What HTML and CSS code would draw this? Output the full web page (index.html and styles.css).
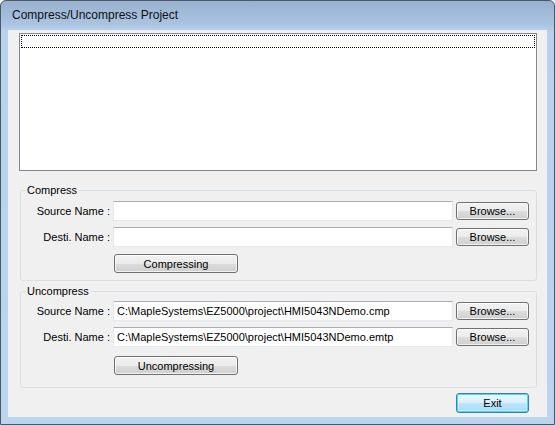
FILE: index.html
```html
<!DOCTYPE html>
<html lang="en">
<head>
  <meta charset="UTF-8" />
  <title>Compress/Uncompress Project</title>
  <link rel="stylesheet" href="styles.css">
</head>
<body>

<div class="window">
  <div class="titlebar">Compress/Uncompress Project</div>

  <div class="client">
    <div class="listbox">
      <div class="focus-row"></div>
    </div>

    <div class="group group-compress">
      <span class="group-title">Compress</span>
      <div class="rows">
        <div class="row">
          <label class="row-label">Source Name :</label>
          <input class="field" type="text" value="" />
          <button class="btn btn-browse">Browse...</button>
        </div>
        <div class="row">
          <label class="row-label">Desti. Name :</label>
          <input class="field" type="text" value="" />
          <button class="btn btn-browse">Browse...</button>
        </div>
        <div class="action">
          <button class="btn btn-wide">Compressing</button>
        </div>
      </div>
    </div>

    <div class="group group-uncompress">
      <span class="group-title">Uncompress</span>
      <div class="rows">
        <div class="row">
          <label class="row-label">Source Name :</label>
          <input class="field" type="text" value="C:\MapleSystems\EZ5000\project\HMI5043NDemo.cmp" />
          <button class="btn btn-browse">Browse...</button>
        </div>
        <div class="row">
          <label class="row-label">Desti. Name :</label>
          <input class="field" type="text" value="C:\MapleSystems\EZ5000\project\HMI5043NDemo.emtp" />
          <button class="btn btn-browse">Browse...</button>
        </div>
        <div class="action">
          <button class="btn btn-wide">Uncompressing</button>
        </div>
      </div>
    </div>

    <div class="footer">
      <button class="btn btn-default">Exit</button>
    </div>
  </div>
</div>

</body>
</html>
```

FILE: styles.css
```css
* {
  box-sizing: border-box;
}

body {
  margin: 0;
  background-color: #f0f0f0;
  font-family: "Liberation Sans", Arial, sans-serif;
  font-size: 11px;
  color: #000;
}

.window {
  width: 555px;
  height: 425px;
  border: 1px solid #4a5868;
  border-radius: 6px 6px 0 0;
  padding: 0 7px 7px 7px;
  background: linear-gradient(to bottom, #97b1cf 0px, #abc4e1 24px, #b9d1ea 30px, #bcd4ee 100%);
  display: flex;
  flex-direction: column;
}

.titlebar {
  height: 29px;
  padding: 7px 0 0 4px;
  font-size: 12px;
  line-height: 15px;
  color: #111;
}

.client {
  flex: 1;
  background-color: #f0f0f0;
  padding-top: 3px;
}

.listbox {
  margin-left: 11px;
  width: 518px;
  height: 138px;
  background-color: #fff;
  border: 1px solid #828790;
  padding: 1px;
}

.focus-row {
  height: 13px;
  border: 1px dotted #000;
}

.group {
  margin-left: 12px;
  width: 517px;
  border: 1px solid #d5dfe5;
  border-radius: 3px;
  padding: 0 0 7px 0;
}

.group-compress {
  margin-top: 19px;
}

.group-uncompress {
  margin-top: 10px;
  padding-bottom: 12px;
}

.group-title {
  display: block;
  width: fit-content;
  height: 13px;
  line-height: 13px;
  margin: -7px 0 0 5px;
  padding: 0 2px 0 1px;
  background-color: #f0f0f0;
}

.rows {
  margin-top: 4px;
  display: flex;
  flex-direction: column;
  gap: 6px;
}

.group-uncompress .rows {
  margin-top: 3px;
}

.row {
  display: flex;
  align-items: center;
  height: 20px;
}

.row-label {
  width: 89px;
  text-align: right;
  margin-right: 3px;
}

.field {
  width: 340px;
  height: 20px;
  margin: 0 3px 0 0;
  padding: 0 3px;
  border: 1px solid #e3e9ef;
  border-top-color: #abadb3;
  background-color: #fff;
  font-family: "Liberation Sans", Arial, sans-serif;
  font-size: 11px;
  color: #000;
  outline: none;
}

.btn {
  height: 18px;
  padding: 0;
  border: 1px solid #707070;
  border-radius: 3px;
  background: linear-gradient(to bottom, #f2f2f2 0%, #ebebeb 50%, #dddddd 51%, #cfcfcf 100%);
  box-shadow: inset 0 0 0 1px rgba(255, 255, 255, 0.7);
  font-family: "Liberation Sans", Arial, sans-serif;
  font-size: 11px;
  color: #000;
}

.btn-browse {
  width: 73px;
}

.action {
  margin-top: 1px;
  padding-left: 93px;
}

.btn-wide {
  width: 124px;
  height: 19px;
}

.group-uncompress .action {
  margin-top: 3px;
}

.footer {
  display: flex;
  justify-content: flex-end;
  padding: 5px 18px 0 0;
}

.btn-default {
  width: 73px;
  height: 20px;
  border-color: #3c7fb1;
  background: linear-gradient(to bottom, #eaf6fd 0%, #d9f0fc 50%, #bee6fd 51%, #a7d9f5 100%);
  box-shadow: inset 0 0 0 1px #48d6ff, inset 0 0 0 2px rgba(255, 255, 255, 0.4);
}
```
